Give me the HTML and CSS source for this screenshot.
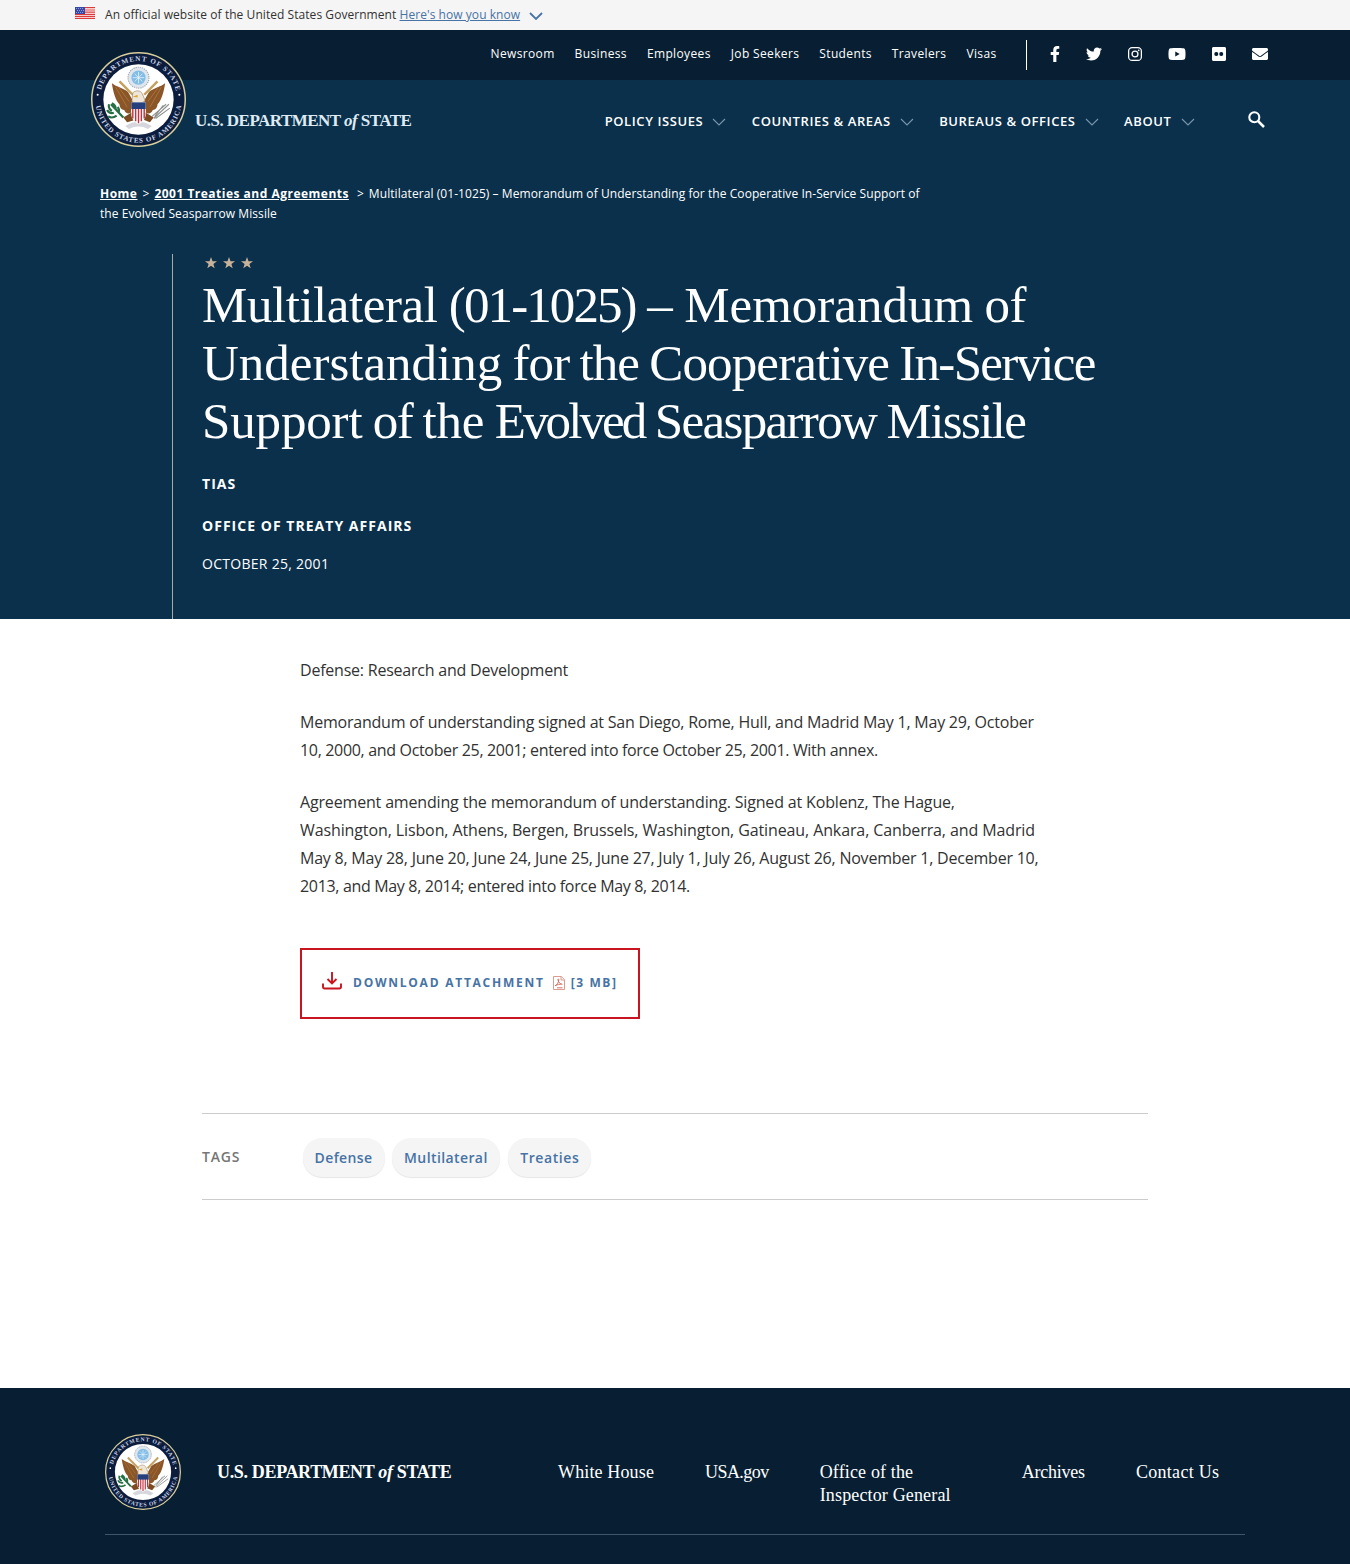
FILE: index.html
```html
<!DOCTYPE html>
<html lang="en">
<head>
<meta charset="utf-8">
<title>Multilateral (01-1025) – United States Department of State</title>
<link rel="stylesheet" href="styles.css">
</head>
<body>
<svg class="defs" width="0" height="0" aria-hidden="true">
  <defs>
    <path id="ring-top" d="M9.5 50a40.5 40.5 0 0 1 81 0"/>
    <path id="ring-bottom" d="M4.5 50a45.5 45.5 0 0 0 91 0"/>
    <symbol id="seal" viewBox="0 0 100 100">
      <circle cx="50" cy="50" r="49.2" fill="#0b1c3c" stroke="#d9cf9c" stroke-width="1.6"/>
      <circle cx="50" cy="50" r="37" fill="#fff"/>
      <g class="seal-text">
        <text><textPath href="#ring-top" startOffset="10" textLength="108">DEPARTMENT OF STATE</textPath></text>
        <text><textPath href="#ring-bottom" startOffset="7" textLength="129">UNITED STATES OF AMERICA</textPath></text>
      </g>
      <circle cx="7" cy="45" r="1.1" fill="#fff"/><circle cx="93" cy="45" r="1.1" fill="#fff"/>
      <circle cx="50" cy="27" r="11" fill="#dfe7ee" stroke="#a9adb5" stroke-width="1.2" stroke-dasharray="1.5 .8"/>
      <circle cx="50" cy="27" r="7.5" fill="#83bde6"/>
      <path d="M46 23l8 8m0-8l-8 8m4-10v12m-6-6h12" stroke="#e6f3fb" stroke-width=".8"/>
      <path d="M30 31l14 14M70 31L56 45" stroke="#c4a15e" stroke-width="2.6"/>
      <path d="M22 33c5 4 12 5 17 9l5 9-2 13c-3 2-6 0-7-3-3 0-5-3-5-6-4-3-7-14-8-22z" fill="#8a5527"/>
      <path d="M78 33c-5 4-12 5-17 9l-5 9 2 13c3 2 6 0 7-3 3 0 5-3 5-6 4-3 7-14 8-22z" fill="#8a5527"/>
      <path d="M26 37l12 21M29 37l11 15M74 37L62 58M71 37L60 52" stroke="#b27a42" stroke-width=".8"/>
      <path d="M44 43c3-3 8-3 10 1l3 7-7 5-7-4z" fill="#eee6d8" stroke="#92734c" stroke-width=".6"/>
      <path d="M49 45l-5 2 5 1" fill="#d9a530"/>
      <path d="M34 69l10-6 12 0 10 6-4 5-10-4-14 4z" fill="#7c4b22"/>
      <path d="M21 55l13 14m-12-7c-3-2-4-4-3-7m5 9c-4 1-6-1-7-3m10 6c-4 3-7 2-9 1m8-8c0-3-2-5-4-6m7 10c1-3 0-5-1-6" stroke="#257044" stroke-width="2.3" fill="none"/>
      <path d="M82 55L66 70M79 55L64 68M76 56l-9 12M83 59L68 70" stroke="#8c908c" stroke-width="1.1"/>
      <path d="M36 78q14-9 28 0l-4 3q-10-5-20 0z" fill="#d5d7dc"/>
      <path d="M42.500 53h15v14q-1 6-7.500 9-6.500-3-7.500-9z" fill="#fff"/>
      <path d="M44 57v13M47 57v16M50 57v18M53 57v16M56 57v13" stroke="#c13340" stroke-width="1.5"/>
      <path d="M42.500 53h15v7h-15z" fill="#26407e"/>
    </symbol>
    <symbol id="chevron" viewBox="0 0 14 8"><path d="M1 1l6 6 6-6" fill="none" stroke="currentColor" stroke-width="1.1"/></symbol>
    <symbol id="star" viewBox="0 0 12 12"><path d="M6 0l1.5 4.2H12L8.400 6.900 9.700 11.300 6 8.700 2.300 11.300 3.600 6.900 0 4.200h4.500z" fill="currentColor"/></symbol>
  </defs>
</svg>

<div class="gov-banner">
  <svg class="flag" viewBox="0 0 20 12"><path fill="#fff" d="M0 0h20v12H0z"/><path d="M0 .6h20M0 3h20M0 5.200h20M0 7.400h20M0 9.400h20M0 11.400h20" stroke="#dc3b3b" stroke-width="1.200"/><path fill="#3749a5" d="M0 0h10v7H0z"/><path d="M1 1.500h8M2 3.500h7M1 5.500h8" stroke="#b9c0ec" stroke-width=".7" stroke-dasharray="1 1"/></svg>
  <p>An official website of the United States Government <a href="#">Here's how you know</a></p>
  <svg class="banner-chevron" viewBox="0 0 14 8"><path d="M1 1l6 6 6-6" fill="none" stroke="#4773a5" stroke-width="1.800"/></svg>
</div>

<header class="site-header">
  <a class="brand" href="#"><svg class="seal"><use href="#seal"/></svg><span class="brand-name">U.S. DEPARTMENT <i>of</i> STATE</span></a>
  <div class="utility">
    <nav class="utility-links"><a>Newsroom</a><a>Business</a><a>Employees</a><a>Job Seekers</a><a>Students</a><a>Travelers</a><a>Visas</a></nav>
    <div class="social">
      <svg width="10" height="16" viewBox="0 0 320 512"><path d="M279 288l14-93h-89v-60c0-25 12-50 52-50h41V7s-37-7-72-7c-73 0-121 44-121 125v70H23v93h81v224h100V288z"/></svg>
      <svg width="16" height="16" viewBox="0 0 512 512"><path d="M459 152c0 4 0 9 0 14 0 139-106 299-299 299-59 0-115-17-161-47 8 1 16 1 25 1 49 0 94-17 130-45-46-1-85-31-98-73 6 1 13 2 20 2 9 0 19-1 28-4-48-10-84-52-84-103v-1c14 8 30 13 47 13-28-19-47-51-47-87 0-19 5-37 14-53 52 64 130 106 217 110-2-8-3-16-3-24 0-58 47-105 105-105 30 0 58 13 77 33 24-5 46-13 67-25-8 24-24 45-46 58 21-2 42-8 60-16-14 21-32 39-52 53z"/></svg>
      <svg width="14" height="16" viewBox="0 0 448 512"><rect x="20" y="52" width="408" height="408" rx="112" fill="none" stroke="#fff" stroke-width="40"/><circle cx="224" cy="256" r="94" fill="none" stroke="#fff" stroke-width="42"/><circle cx="343" cy="137" r="27"/></svg>
      <svg width="18" height="16" viewBox="0 0 576 512"><path fill-rule="evenodd" d="M550 124c-6-24-25-42-49-49-42-11-213-11-213-11s-171 0-213 11c-24 7-43 25-49 49-11 43-11 132-11 132s0 90 11 133c6 23 25 41 49 48 42 11 213 11 213 11s171 0 213-11c24-7 43-25 49-48 11-43 11-133 11-133s0-89-11-132zM232 338V175l143 81z"/></svg>
      <svg width="14" height="16" viewBox="0 0 448 512"><path fill-rule="evenodd" d="M400 32H48C22 32 0 54 0 80v352c0 27 22 48 48 48h352c27 0 48-21 48-48V80c0-26-21-48-48-48zM145 319a64 64 0 1 1 0-127 64 64 0 0 1 0 127zm159 0a64 64 0 1 1 0-127 64 64 0 0 1 0 127z"/></svg>
      <svg width="16" height="16" viewBox="0 0 512 512"><path d="M502 191c4-3 10 0 10 5v204c0 27-21 48-48 48H48c-26 0-48-21-48-48V196c0-5 6-8 10-5 22 17 52 40 154 114 21 15 57 47 92 47 36 0 72-32 93-47 102-74 131-97 153-114zM256 320c23 0 57-29 73-41 133-97 143-105 174-129 6-5 9-12 9-19v-19c0-26-21-48-48-48H48C22 64 0 86 0 112v19c0 7 3 14 9 19 31 24 41 32 174 129 17 12 50 41 73 41z"/></svg>
    </div>
  </div>
  <div class="main-row">
    <nav class="main-nav"><a>POLICY ISSUES<svg><use href="#chevron"/></svg></a><a>COUNTRIES &amp; AREAS<svg><use href="#chevron"/></svg></a><a>BUREAUS &amp; OFFICES<svg><use href="#chevron"/></svg></a><a>ABOUT<svg><use href="#chevron"/></svg></a></nav>
    <svg class="search" viewBox="0 0 17 17"><circle cx="6.300" cy="6.300" r="5" fill="none" stroke="#fff" stroke-width="2.100"/><path d="M10 10l6 6" stroke="#fff" stroke-width="2.500"/></svg>
  </div>
</header>

<section class="hero">
  <p class="breadcrumb"><a href="#">Home</a><span class="sep">&gt;</span><a href="#">2001 Treaties and Agreements</a><span class="sep sep-last">&gt;</span>Multilateral (01-1025) – Memorandum of Understanding for the Cooperative In-Service Support of<br>the Evolved Seasparrow Missile</p>
  <div class="hero-body">
    <div class="stars"><svg><use href="#star"/></svg><svg><use href="#star"/></svg><svg><use href="#star"/></svg></div>
    <h1>
      <span class="line l1"><span class="t4">Multilateral</span> <span class="t1">(01-1025)</span> <span class="dash">–</span> <span class="t5">Memorandum</span> of</span>
      <span class="line l2"><span class="t5">Understanding</span> for the Cooperative <span class="t2">In-Service</span></span>
      <span class="line l3"><span class="t5">Support</span> of <span class="t5">the</span> <span class="t0">Evolved</span> Seasparrow Missile</span>
    </h1>
    <p class="kind">TIAS</p>
    <p class="office">OFFICE OF TREATY AFFAIRS</p>
    <p class="date">OCTOBER 25, 2001</p>
  </div>
</section>

<main>
  <article>
    <p class="loose">Defense: Research and Development</p>
    <p><span class="loose">Memorandum of understanding signed at San Diego, Rome, Hull, and Madrid May 1, May 29, October</span><br><span class="tight">10, 2000, and October 25, 2001; entered into force October 25, 2001. With annex.</span></p>
    <p><span class="looser">Agreement amending the memorandum of understanding. Signed at Koblenz, The Hague,</span><br><span class="loosest">Washington, Lisbon, Athens, Bergen, Brussels, Washington, Gatineau, Ankara, Canberra, and Madrid</span><br><span class="loose">May 8, May 28, June 20, June 24, June 25, June 27, July 1, July 26, August 26, November 1, December 10,</span><br><span class="tight">2013, and May 8, 2014; entered into force May 8, 2014.</span></p>
    <a class="download" href="#">
      <svg class="dl" viewBox="0 0 20 18"><path d="M10 0v11M5.500 7l4.500 4.500L14.500 7M1 11.500v3.300q0 1.700 1.700 1.700h14.600q1.700 0 1.700-1.700v-3.300" fill="none" stroke="#c8151f" stroke-width="1.900"/></svg>
      <span>DOWNLOAD ATTACHMENT</span>
      <svg class="pdf" viewBox="0 0 12 14"><path d="M.5.5h7.800l3.200 3.200v9.800H.5zM8 .5V4h3.500" fill="#fff" stroke="#df9a8f"/><path d="M2 10c2-1 4-4 3.700-6.500-.2-1-1-.7-.8.2.5 2.500 2.200 4.400 4.500 4.600M2.500 9.500q3-1.600 6-1.400M4 11.800h5.500" fill="none" stroke="#cf6255" stroke-width=".9"/></svg>
      <span class="size">[3 MB]</span>
    </a>
  </article>
  <section class="tags"><h2>TAGS</h2><div class="tag-list"><a>Defense</a><a>Multilateral</a><a>Treaties</a></div></section>
</main>

<footer>
  <div class="footer-inner">
    <svg class="seal"><use href="#seal"/></svg>
    <span class="brand-name">U.S. DEPARTMENT <i>of</i> STATE</span>
    <nav><a>White House</a><a>USA.gov</a><a>Office of the<br>Inspector General</a><a>Archives</a><a>Contact Us</a></nav>
  </div>
</footer>
</body>
</html>
```
FILE: styles.css
```css
* { box-sizing: border-box; }
body { margin: 0; width: 1350px; background: #fff; color: #323232; font: 16px/28px "Open Sans", sans-serif; }
p, h1, h2 { margin: 0; }
svg { display: block; flex: none; }
.defs { position: absolute; }
.seal-text { fill: #c9d3e6; font: 700 7.500px "Liberation Serif", serif; }

.gov-banner { display: flex; height: 30px; padding-left: 75px; background: #f5f5f5; font-size: 12px; line-height: 29px; letter-spacing: .055px; }
.gov-banner a { color: #4773a5; text-decoration: underline; }
.flag { width: 20px; height: 12px; margin: 7px 10px 0 0; }
.banner-chevron { width: 14px; height: 8px; margin: 12px 0 0 9px; }

.site-header { display: grid; grid-template: 50px 88px / 1fr auto; padding-right: 82px; background: linear-gradient(#081f33 50px, #0a304c 50px); color: #fff; }
.brand { grid-row: 1 / 3; display: flex; padding: 22px 0 0 91px; color: #fff; text-decoration: none; }
.brand .seal { width: 95px; height: 95px; }
.brand-name { font-family: "Liberation Serif", serif; font-weight: 700; white-space: nowrap; }
.brand .brand-name { margin: 55px 0 0 9px; font-size: 17px; letter-spacing: -.53px; color: #dfeaf3; }
.utility { display: flex; justify-content: flex-end; font-size: 12px; line-height: 47px; letter-spacing: .36px; }
.utility-links { display: flex; gap: 20px; }
.social { display: flex; align-items: center; height: 30px; margin: 10px 0 0 29.500px; padding-left: 23px; border-left: 1px solid #fff; fill: #fff; gap: 26px; }
.social svg { margin-top: -2px; }
.main-row { display: flex; justify-content: flex-end; padding-top: 27px; }
.main-nav { display: flex; gap: 25.500px; font-size: 13px; font-weight: 600; letter-spacing: .6px; }
.main-nav a { display: flex; }
.main-nav svg { width: 14px; height: 8px; margin: 11px 0 0 9px; color: #7c96ab; }
.search { width: 17px; height: 17px; margin: 4px 3px 0 53.500px; }

.hero { height: 451px; padding: 16px 0 0; background: #0a304c; color: #fff; }
.breadcrumb { padding-left: 100px; font-size: 12px; line-height: 20px; letter-spacing: .07px; }
.breadcrumb a { color: #fff; font-weight: 700; letter-spacing: .49px; text-decoration: underline; }
.sep { margin: 0 5px; }
.sep-last { margin-left: 8px; }
.hero-body { height: 365px; margin: 30px 0 0 172px; padding: 2px 0 0 29px; border-left: 1px solid #a5aaa4; }
.stars { display: flex; gap: 6px; padding: 1px 0 0 3px; height: 20px; color: #c8b29a; }
.stars svg { width: 12px; height: 12px; }
h1 { color: #fff; font: 400 51px/58px "Liberation Serif", serif; }
.line { display: block; white-space: nowrap; }
.l1 { letter-spacing: -.68px; word-spacing: -.6px; }
.l2 { letter-spacing: -.85px; word-spacing: -1.800px; }
.l3 { letter-spacing: -1.650px; word-spacing: -.7px; }
/* Title tracking steps, tightest to widest */
.t0 { letter-spacing: -2.900px; }
.t1 { letter-spacing: -1.900px; }
.t2 { letter-spacing: -1.700px; }
.t4 { letter-spacing: -.45px; }
.t5 { letter-spacing: 0; }
.dash { letter-spacing: 0; }
.l3 .t5 { letter-spacing: -.15px; }
.kind, .office { font-size: 14px; font-weight: 700; letter-spacing: 1.030px; }
.kind { margin-top: 20px; }
.office { margin-top: 14px; }
.date { margin-top: 10px; font-size: 14px; letter-spacing: .28px; }

main { height: 769px; padding-top: 37px; }
article { width: 760px; margin-left: 300px; }
article p { margin-bottom: 24px; white-space: nowrap; }
.tight { letter-spacing: -.33px; }
.loose { letter-spacing: -.22px; }
.looser { letter-spacing: -.165px; }
.loosest { letter-spacing: -.11px; }
.download { display: flex; align-items: center; width: 340px; height: 71px; margin-top: 48px; padding: 0 0 1px 20px; border: 2px solid #c8151f; color: #4773a5; text-decoration: none; font-size: 12px; font-weight: 700; letter-spacing: 1.750px; white-space: nowrap; }
.dl { width: 20px; height: 18px; margin: -4px 11px 0 0; }
.pdf { width: 12px; height: 14px; margin: 0 6px 0 8px; }
.size { letter-spacing: 1.600px; }
.tags { display: flex; width: 946px; height: 87px; margin: 94px 0 0 202px; padding-top: 24px; border: solid #ccc; border-width: 1px 0; font-size: 14px; }
.tags h2 { width: 100.500px; padding-top: 5px; color: #767676; font-size: 14px; line-height: 28px; font-weight: 600; letter-spacing: .8px; }
.tag-list { display: flex; gap: 7.500px; }
.tag-list a { height: 39px; padding: 0 12px; border-radius: 19px; background: #f5f5f5; box-shadow: 0 1px 1px #e6e6e6; color: #4773a5; line-height: 39px; font-weight: 600; letter-spacing: .4px; }
.tag-list a:last-child { margin-left: 1px; letter-spacing: .6px; }

footer { height: 176px; background: #081f33; color: #fff; }
.footer-inner { display: flex; width: 1140px; height: 147px; margin-left: 105px; padding-top: 46px; border-bottom: 1px solid #415569; }
footer .seal { width: 76px; height: 76px; }
footer .brand-name { width: 341px; margin: 24px 0 0 36px; font-size: 18px; letter-spacing: -.34px; }
footer nav { display: flex; gap: 51px; margin-top: 27px; font: 18px/23px "Liberation Serif", serif; white-space: nowrap; }
footer nav a:nth-child(1) { letter-spacing: .14px; }
footer nav a:nth-child(2) { letter-spacing: -.55px; }
footer nav a:nth-child(3) { width: 151px; letter-spacing: .15px; }
footer nav a:nth-child(4) { letter-spacing: -.22px; }
footer nav a:nth-child(5) { letter-spacing: .3px; }
```
